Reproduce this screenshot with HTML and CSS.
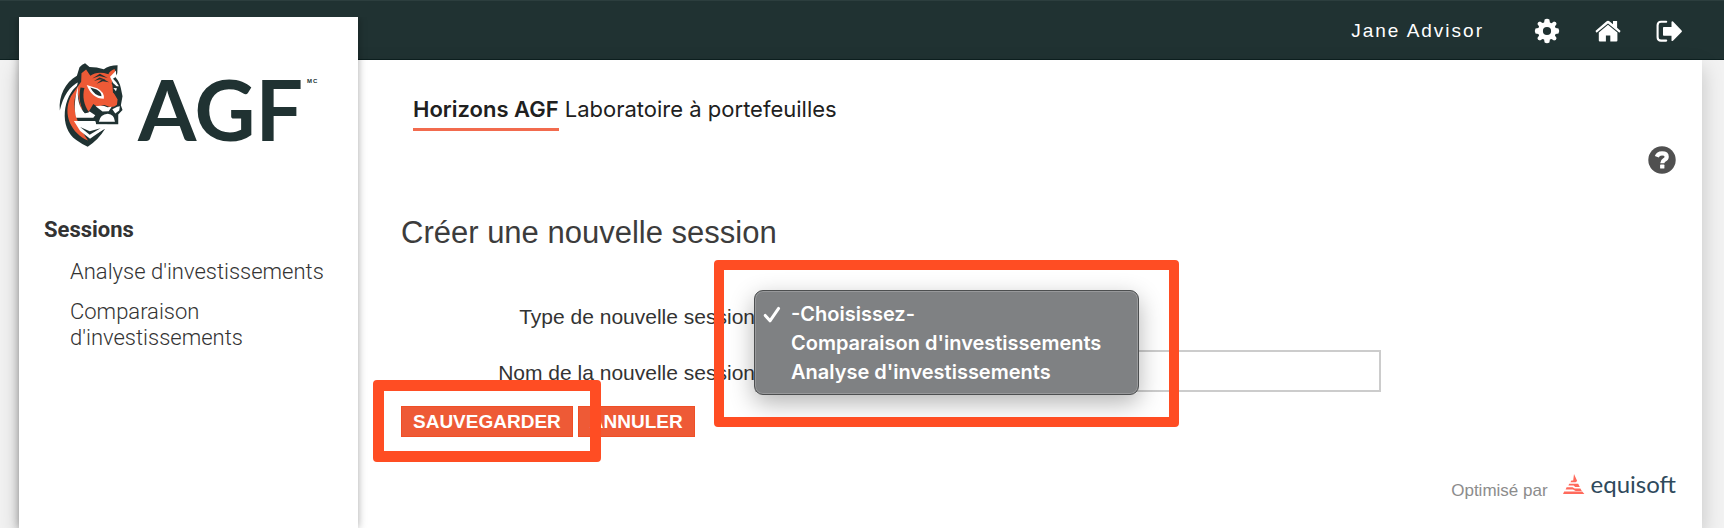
FILE: index.html
```html
<!DOCTYPE html>
<html lang="fr">
<head>
<meta charset="utf-8">
<meta name="viewport" content="width=device-width, initial-scale=1">
<title>Horizons AGF – Laboratoire à portefeuilles</title>
<link rel="stylesheet" href="styles.css">
</head>
<body>
<header class="topbar">
  <span class="user">Jane Advisor</span>
  <nav class="tools" aria-label="Outils">
    <a href="#parametres" aria-label="Paramètres">
      <svg class="icon" viewBox="0 0 26 26"><path fill="#fff" fill-rule="evenodd" d="M10.6 1.5 Q13 .1 15.4 1.5 L15.9 4.5 L17.5 5.2 L20 3.4 Q22.6 3.7 22.6 6.1 L20.9 8.5 L21.6 10.1 L24.5 10.6 Q25.9 13 24.5 15.4 L21.6 15.9 L20.9 17.5 L22.6 20 Q22.3 22.6 20 22.6 L17.5 20.9 L15.9 21.6 L15.4 24.5 Q13 25.9 10.6 24.5 L10.1 21.6 L8.5 20.9 L6 22.6 Q3.4 22.3 3.4 20 L5.1 17.5 L4.4 15.9 L1.5 15.4 Q.1 13 1.5 10.6 L4.4 10.1 L5.1 8.5 L3.4 6 Q3.7 3.4 6 3.4 L8.5 5.1 L10.1 4.5Z M13 8.9A4.1 4.1 0 1 0 13 17.1A4.1 4.1 0 1 0 13 8.9Z"/></svg>
    </a>
    <a href="#accueil" aria-label="Accueil">
      <svg class="icon" viewBox="0 0 26 26"><path fill="#fff" d="M13 6.8 L22.4 14.6 V22.6 Q22.4 23.6 21.4 23.6 H15.3 V17.4 H10.9 V23.6 H4.9 Q3.8 23.6 3.8 22.6 V14.6Z"/><path fill="#fff" d="M.4 13.1 L11.3 3.4 Q13 2.1 14.7 3.4 L18 6.2 V3.1 H22.1 V9.8 L25.6 13.1 L24.4 14.7 L13 5.6 L1.6 14.7Z"/></svg>
    </a>
    <a href="#deconnexion" aria-label="Déconnexion">
      <svg class="icon" viewBox="0 0 26 26"><path fill="none" stroke="#fff" stroke-width="2.1" stroke-linecap="round" stroke-linejoin="round" d="M10.2 3.8 H5 Q1.6 3.8 1.6 7.2 V19.2 Q1.6 22.6 5 22.6 H10.2"/><path fill="#fff" d="M7.8 9 H15.5 V4 Q15.8 2.8 17 3.6 L25.6 12.4 Q26.2 13.2 25.6 14 L17 22.8 Q15.8 23.6 15.5 22.4 V17.8 H7.8 Q7 17.8 7 17 V9.8 Q7 9 7.8 9Z"/></svg>
    </a>
  </nav>
</header>

<div class="page">
  <aside class="sidebar">
    <a class="logo" href="#agf" aria-label="AGF">
      <svg class="tiger" viewBox="24 18 198 262">
        <g fill="#203232">
          <path d="M28 166 C24 120 45 80 80 60 L88 34 Q96 25 105 22 L122 36 L104 52 L88 78 C58 90 38 122 28 166Z"/>
          <path d="M84 88 C38 120 24 218 78 256 Q94 268 113 276 Q146 254 166 221 L118 248Z"/>
          <path d="M88 62 L106 34 Q136 32 162 40 Q178 28 204 28 L203 52 L197 64 Q211 80 214 98 L219 122 L214 150 L219 164 L206 178 L206 208 L138 208 L136 200 H76 L64 150Z"/>
        </g>
        <path fill="#ee5a36" d="M93 78 L94 52 L108 41 L121 60 Q142 44 176 55 Q180 44 195 39 Q198 44 195 56 L190 64 L186 84 L194 94 L191 110 L204 132 L202 148 Q192 157 178 154 L164 149 L142 154 L130 146 L122 160 L114 172 L92 160 L82 110 C66 130 66 188 114 257 C64 236 34 178 62 122Z"/>
        <path fill="#fff" d="M84 92 C74 120 70 162 78 188 H130 L136 180 L119 169 L106 174 C86 160 80 126 84 92Z"/>
        <path fill="#203232" d="M91 96 C84 126 91 158 104 174 L117 171 C101 148 96 122 103 97Z"/>
        <path fill="#fff" d="M71 198 H136 L139 209 H173 L158 225 L120 252 L90 228Z"/>
        <path fill="#203232" d="M90 216 L119 229 L152 220 L119 240Z"/>
        <g fill="#203232">
          <path d="M127 68 L150 54 L174 67 L149 61Z M140 84 L159 69 L178 80 L159 77Z M132 76 L149 65 L168 72 L149 71Z"/>
          <path d="M188 85 L202 96 L204 122 L190 111Z"/>
        </g>
        <path fill="#fff" d="M110 88 L142 98 Q165 110 162 130 Q126 130 110 88Z"/>
        <path fill="#203232" d="M121 96 L140 102 Q155 110 155 122 Q134 122 121 96Z"/>
        <path fill="#fff" d="M181 63 L193 51 L199 44 L200 62 L190 69 L200 80 L208 92 L201 92 L190 82Z M191 97 L202 98 L199 107Z"/>
        <path fill="#fff" d="M137 153 Q159 149 173 156 L186 154 L177 168 L158 169Z M188 162 L203 154 L211 153 L209 166 L197 175Z M147 200 Q151 178 174 176 Q194 178 196 200Z"/>
      </svg>
      <span class="logo-name">AGF</span><sup class="logo-mark">MC</sup>
    </a>
    <nav class="menu" aria-label="Sessions">
      <h2 class="menu-title">Sessions</h2>
      <ul class="menu-list">
        <li><a href="#analyse">Analyse d'investissements</a></li>
        <li><a href="#comparaison">Comparaison d'investissements</a></li>
      </ul>
    </nav>
  </aside>

  <main class="content">
    <p class="product"><strong>Horizons AGF</strong> Laboratoire à portefeuilles</p>
    <button class="help" type="button" aria-label="Aide">
      <svg viewBox="0 0 28 28"><circle cx="14" cy="14" r="13.7" fill="#505050"/><path fill="none" stroke="#fff" stroke-width="4.2" d="M8.8 10.8 Q10 7.4 14 7.4 Q18.7 7.4 18.7 10.7 Q18.7 12.7 16.3 14 Q14.3 15.2 14.3 17.2"/><rect x="12.1" y="18.6" width="4.3" height="4" rx=".6" fill="#fff"/></svg>
    </button>
    <h1 class="title">Créer une nouvelle session</h1>

    <form class="form">
      <div class="fields">
        <label for="type">Type de nouvelle session</label>
        <div class="field type-field">
          <select id="type">
            <option>-Choisissez-</option>
            <option>Comparaison d'investissements</option>
            <option>Analyse d'investissements</option>
          </select>
          <ul class="popup" role="listbox" aria-label="Type de nouvelle session">
            <li role="option" aria-selected="true"><svg class="check" viewBox="0 0 18 18"><path d="M2.2 9.4 L7 14.8 L15.6 2.4" fill="none" stroke="#fff" stroke-width="3" stroke-linecap="round" stroke-linejoin="round"/></svg>-Choisissez-</li>
            <li role="option" aria-selected="false">Comparaison d'investissements</li>
            <li role="option" aria-selected="false">Analyse d'investissements</li>
          </ul>
          <span class="highlight highlight-type"></span>
        </div>
        <label for="nom">Nom de la nouvelle session</label>
        <div class="field"><input id="nom" type="text"></div>
      </div>
      <div class="actions">
        <button class="btn" type="button">SAUVEGARDER</button>
        <button class="btn" type="button">ANNULER</button>
        <span class="highlight highlight-save"></span>
      </div>
    </form>

    <footer class="footer">
      <span>Optimisé par</span>
      <a class="vendor" href="#equisoft">
        <svg class="vendor-icon" viewBox="0 0 22 20"><path fill="#ff6a5c" d="M11 0 L14.2 7 L12.6 8.2 H7.4 L8.4 6.6 H10.2Z M6.2 9.8 H15.2 L16.8 13 H12.2 L10.6 11.4 H5.4Z M3.6 13.2 H9.6 L11.6 14.4 H17.4 L18.8 17 H12.6 L10 15.6 H2.6Z M1.2 17.4 H19.2 L21.4 20 H0Z"/></svg>
        <span>equisoft</span>
      </a>
    </footer>
  </main>
</div>
</body>
</html>
```
FILE: styles.css
```css
* { box-sizing: border-box; }

body {
  margin: 0;
  min-height: 100vh;
  display: flex;
  flex-direction: column;
  background: #f2f2f2;
  color: #333;
  font: 21px/24px "Liberation Sans", Arial, sans-serif;
}

a { color: inherit; text-decoration: none; }
button { font: inherit; cursor: pointer; }

.topbar {
  display: flex;
  align-items: center;
  justify-content: flex-end;
  gap: 50px;
  height: 60px;
  padding: 2px 42px 0 0;
  background: #203232;
  border-top: 1px solid #2c3e3e;
  border-bottom: 1px solid #0d2020;
}

.user { color: #fff; font-size: 19px; letter-spacing: 2px; }
.tools { display: flex; gap: 35px; }
.tools a, .icon { display: block; width: 26px; height: 26px; }

.page {
  flex: 1;
  display: flex;
  margin: 0 22px 0 19px;
  background: #fff;
  box-shadow: 0 8px 20px rgba(0, 0, 0, .2);
  clip-path: inset(-43px -22px 0 -19px);
}

.sidebar {
  flex: 0 0 339px;
  margin-top: -43px;
  padding: 45px 25px 24px 25px;
  background: #fff;
  box-shadow: 0 0 8px rgba(0, 0, 0, .35);
}

.logo {
  display: flex;
  align-items: flex-start;
  height: 87px;
  padding-left: 14px;
}

.tiger { flex: none; width: 66px; height: 86px; }

.logo-name {
  margin-left: 14px;
  color: #203232;
  font: 700 84px/94px Lato, sans-serif;
}

.logo-mark {
  margin: 15px 0 0 4px;
  color: #203232;
  font: bold 6px/8px "Liberation Sans", Arial, sans-serif;
  letter-spacing: 1px;
}

.menu { margin-top: 68px; font-family: Roboto, sans-serif; }
.menu-title { margin: 0; font-size: 22px; line-height: 26px; }

.menu-list {
  display: grid;
  gap: 14px;
  margin: 16px 0 0;
  padding: 0 0 0 26px;
  list-style: none;
  font-size: 22px;
  font-weight: 300;
  line-height: 26px;
}

.menu-list a { display: block; }

.content {
  flex: 1;
  min-width: 0;
  display: flex;
  flex-direction: column;
  padding: 36px 26px 25px 43px;
}

.product {
  margin: 0 0 0 12px;
  color: #202020;
  font: 22px/26px Inter, sans-serif;
}

.product strong {
  display: inline-block;
  padding-bottom: 6px;
  border-bottom: 3px solid #f26b4e;
  font-weight: 600;
}

.help {
  align-self: flex-end;
  width: 28px;
  height: 28px;
  margin-top: 15px;
  padding: 0;
  border: 0;
  background: none;
}

.help svg { display: block; }

.title {
  margin: 41px 0 43px;
  color: #3c3c3c;
  font-size: 31px;
  font-weight: 400;
  line-height: 36px;
}

.fields {
  display: grid;
  grid-template-columns: 354px minmax(0, 626px);
  row-gap: 14px;
  align-items: center;
}

.fields label { padding-top: 3px; text-align: right; white-space: nowrap; }
.field { height: 42px; }
.type-field { position: relative; }

.field input, .field select {
  display: block;
  height: 42px;
  border: 2px solid #ccc;
  background: #fff;
  font: inherit;
}

.field input { width: 100%; padding: 0 8px; }
.field select { width: 380px; }

.popup {
  position: absolute;
  z-index: 1;
  top: -4px;
  left: -1px;
  width: 385px;
  margin: 0;
  padding: 9px 0 7px;
  border: 1px solid #4d4f50;
  border-radius: 9px;
  background: #7f8183;
  box-shadow: inset 0 0 0 1px #98999b, 0 8px 24px rgba(0, 0, 0, .3);
  color: #fff;
  font: 600 20px/29px Inter, sans-serif;
  list-style: none;
}

.popup li { position: relative; padding-left: 36px; }
.check { position: absolute; top: 6px; left: 8px; width: 18px; height: 18px; }

.highlight {
  position: absolute;
  z-index: 2;
  border: 11px solid #ff4d23;
  border-radius: 4px;
  pointer-events: none;
}

.highlight-type { top: -34px; left: -41px; width: 465px; height: 167px; border-width: 10px; }
.highlight-save { top: -26px; left: -28px; width: 228px; height: 82px; }

.actions {
  position: relative;
  display: flex;
  gap: 5px;
  margin-top: 14px;
}

.btn {
  height: 31px;
  padding: 0 11px;
  border: 1px solid #f04e25;
  background: #ee5a36;
  color: #fff;
  font-size: 19px;
  font-weight: 700;
  line-height: 29px;
}

.footer {
  display: flex;
  align-items: flex-end;
  justify-content: flex-end;
  gap: 15px;
  margin-top: auto;
  color: #8c8c8c;
  font-size: 17px;
}

.vendor {
  display: flex;
  align-items: center;
  gap: 6px;
  padding-bottom: 4px;
  color: #2f4a5c;
  font: 24px/30px Lato, sans-serif;
}

.vendor-icon { width: 22px; height: 20px; }
```
